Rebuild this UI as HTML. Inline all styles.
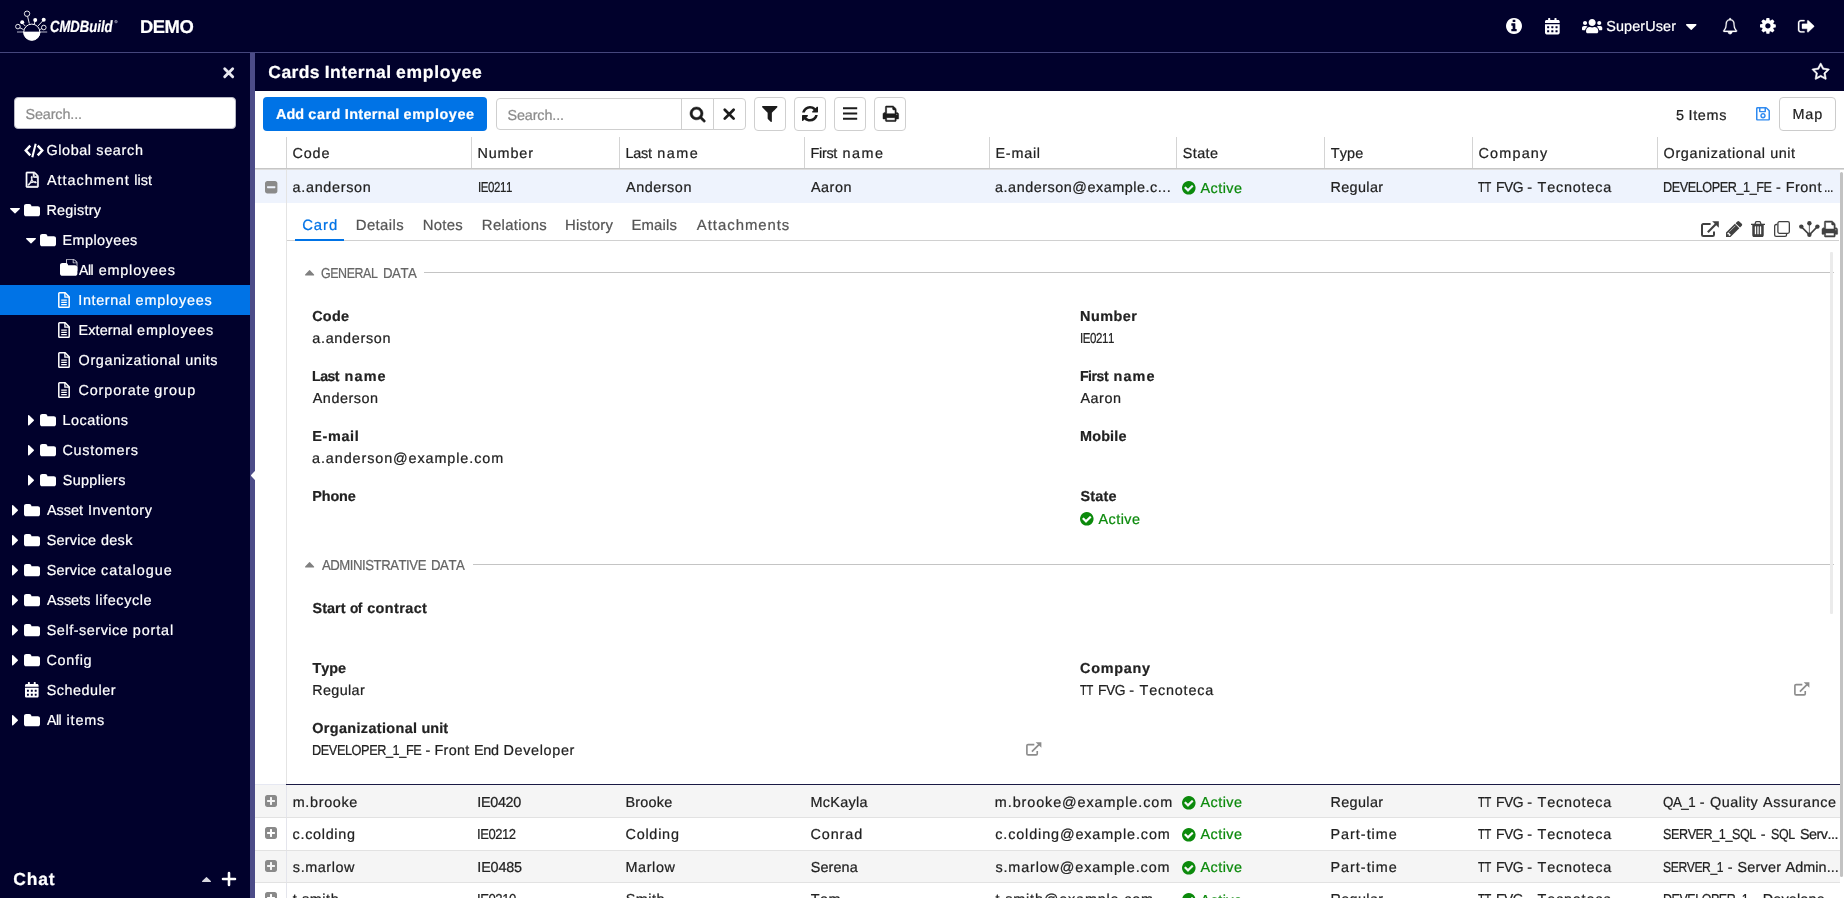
<!DOCTYPE html>
<html lang="en"><head><meta charset="utf-8"><title>CMDBuild - Cards Internal employee</title>
<style>
html,body{margin:0;padding:0}
body{width:1844px;height:898px;overflow:hidden;position:relative;background:#fff;font-family:"Liberation Sans",sans-serif;font-kerning:none;color:#222;will-change:transform}
.t{position:absolute;white-space:pre;line-height:20px;height:20px;font-size:14.4px;-webkit-text-stroke:0.22px currentColor;text-rendering:geometricPrecision}
.t span{position:absolute;top:0;transform-origin:0 0}
.b{position:absolute;box-sizing:border-box}
.i{position:absolute;display:block;overflow:visible}
.t{-webkit-text-stroke:0.22px currentColor;text-rendering:geometricPrecision}
</style></head><body>
<div class="b" style="left:0px;top:0px;width:1844px;height:52px;background:#01012c"></div>
<div class="b" style="left:0px;top:52px;width:1844px;height:1px;background:#45467c"></div>
<svg class="i" style="left:0;top:0;width:130px;height:52px" viewBox="0 0 130 52" fill="none" stroke="#fff" stroke-width="0.9"><path d="M17 32H47.2" stroke="#c8c8d8" stroke-width="0.9"/><circle cx="31.8" cy="32.2" r="8.1" stroke-width="1"/><path d="M23.3 32a8.5 8.5 0 0 0 17 0z" fill="#fff" stroke="none"/><circle cx="27.05" cy="13.7" r="2.7"/><path d="M27.6 16.4L29.3 23.6"/><circle cx="22.2" cy="22.3" r="2" fill="#fff" stroke="none"/><path d="M22.8 23.5L25.4 26.2"/><circle cx="17.9" cy="26.6" r="2.3"/><path d="M19.9 27.8L23.6 29.6"/><circle cx="35.2" cy="20.1" r="2" fill="#fff" stroke="none"/><path d="M35 21L34.3 24.2"/><circle cx="43.7" cy="19.8" r="2" fill="#fff" stroke="none"/><path d="M42.8 20.8L38 26"/><circle cx="43.8" cy="27.5" r="2.3"/><path d="M41.8 28.6L40.2 29.5"/></svg>
<div class="t" style="left:50.3px;top:17px;font-size:16.3px;font-weight:700;color:#fff;transform:scaleX(0.804);transform-origin:0 0;font-style:italic;">CMDBuild</div>
<div class="t" style="left:114.5px;top:12px;font-size:4px;font-weight:400;color:#9090a8;">®</div>
<div class="t" style="left:139.6px;top:17px;font-size:18.5px;font-weight:700;color:#fff;"><span style="left:0.27px;letter-spacing:-0.5px;transform:scaleX(0.996);">DEMO</span></div>
<svg class="i" style="left:1506px;top:18px;width:16px;height:16px" viewBox="0 0 1536 1536" preserveAspectRatio="none" fill="#fff"><path d="M1024 1248V1088Q1024 1074 1015 1065Q1006 1056 992 1056H896V544Q896 530 887 521Q878 512 864 512H544Q530 512 521 521Q512 530 512 544V704Q512 718 521 727Q530 736 544 736H640V1056H544Q530 1056 521 1065Q512 1074 512 1088V1248Q512 1262 521 1271Q530 1280 544 1280H992Q1006 1280 1015 1271Q1024 1262 1024 1248ZM896 352V192Q896 178 887 169Q878 160 864 160H672Q658 160 649 169Q640 178 640 192V352Q640 366 649 375Q658 384 672 384H864Q878 384 887 375Q896 366 896 352ZM1433 382Q1536 559 1536 768Q1536 977 1433 1154Q1330 1330 1154 1433Q977 1536 768 1536Q559 1536 382 1433Q206 1330 103 1154Q0 977 0 768Q0 559 103 382Q206 206 382 103Q559 0 768 0Q977 0 1154 103Q1330 206 1433 382Z"/></svg>
<svg class="i" style="left:1544.7px;top:17.8px;width:14.7px;height:16.4px" viewBox="0 0 448 512" preserveAspectRatio="none" fill="#fff"><path d="M0 464c0 26.5 21.5 48 48 48h352c26.5 0 48-21.5 48-48V192H0v272zm320-196c0-6.6 5.4-12 12-12h40c6.6 0 12 5.4 12 12v40c0 6.6-5.4 12-12 12h-40c-6.6 0-12-5.4-12-12v-40zm0 128c0-6.6 5.4-12 12-12h40c6.6 0 12 5.4 12 12v40c0 6.6-5.4 12-12 12h-40c-6.6 0-12-5.4-12-12v-40zM192 268c0-6.6 5.4-12 12-12h40c6.6 0 12 5.4 12 12v40c0 6.6-5.4 12-12 12h-40c-6.6 0-12-5.4-12-12v-40zm0 128c0-6.6 5.4-12 12-12h40c6.6 0 12 5.4 12 12v40c0 6.6-5.4 12-12 12h-40c-6.6 0-12-5.4-12-12v-40zM64 268c0-6.6 5.4-12 12-12h40c6.6 0 12 5.4 12 12v40c0 6.6-5.4 12-12 12H76c-6.6 0-12-5.4-12-12v-40zm0 128c0-6.6 5.4-12 12-12h40c6.6 0 12 5.4 12 12v40c0 6.6-5.4 12-12 12H76c-6.6 0-12-5.4-12-12v-40zM400 64h-48V16c0-8.8-7.2-16-16-16h-32c-8.800 0-16 7.200-16 16v48H160V16c0-8.800-7.200-16-16-16h-32c-8.800 0-16 7.200-16 16v48H48C21.500 64 0 85.500 0 112v48h448v-48c0-26.500-21.500-48-48-48z"/></svg>
<svg class="i" style="left:1581.8px;top:19px;width:20.3px;height:14.2px" viewBox="0 0 640 448" preserveAspectRatio="none" fill="#fff"><path d="M96 192c35.300 0 64-28.700 64-64s-28.700-64-64-64-64 28.700-64 64 28.700 64 64 64zm448 0c35.300 0 64-28.700 64-64s-28.700-64-64-64-64 28.700-64 64 28.700 64 64 64zm32 32h-64c-17.600 0-33.500 7.100-45.100 18.600 40.300 22.100 68.900 62 75.100 109.400h66c17.700 0 32-14.300 32-32v-32c0-35.300-28.700-64-64-64zm-256 0c61.900 0 112-50.100 112-112S381.900 0 320 0 208 50.100 208 112s50.100 112 112 112zm76.800 32h-8.300c-20.800 10-43.900 16-68.500 16s-47.600-6-68.500-16h-8.300C179.600 256 128 307.600 128 371.200V400c0 26.500 21.500 48 48 48h288c26.500 0 48-21.500 48-48v-28.800c0-63.600-51.600-115.200-115.200-115.200zm-223.700-13.400C161.500 231.100 145.600 224 128 224H64c-35.300 0-64 28.700-64 64v32c0 17.700 14.300 32 32 32h65.900c6.300-47.400 34.900-87.300 75.200-109.400z"/></svg>
<div class="t" style="left:1605.5px;top:17px;color:#fff;"><span style="left:0.74px;letter-spacing:0.12px;">SuperUser</span></div>
<svg class="i" style="left:1686px;top:23.5px;width:10.5px;height:6px" viewBox="0 0 1024 576" preserveAspectRatio="none" fill="#fff"><path d="M1005 109 557 557Q538 576 512 576Q486 576 467 557L19 109Q0 90 0 64Q0 38 19 19Q38 0 64 0H960Q986 0 1005 19Q1024 38 1024 64Q1024 90 1005 109Z"/></svg>
<svg class="i" style="left:1722.8px;top:17.8px;width:14.2px;height:16.2px" viewBox="0 0 1664 1792" preserveAspectRatio="none" fill="#fff" stroke="#fff" stroke-width="35" stroke-linejoin="round"><path d="M832 1680Q773 1680 730 1638Q688 1595 688 1536Q688 1520 672 1520Q656 1520 656 1536Q656 1609 708 1660Q759 1712 832 1712Q848 1712 848 1696Q848 1680 832 1680ZM182 1408H1482Q1216 1108 1216 576Q1216 525 1192 471Q1168 417 1123 368Q1078 319 1002 288Q925 256 832 256Q739 256 662 288Q586 319 541 368Q496 417 472 471Q448 525 448 576Q448 1108 182 1408ZM1664 1408Q1664 1460 1626 1498Q1588 1536 1536 1536H1088Q1088 1642 1013 1717Q938 1792 832 1792Q726 1792 651 1717Q576 1642 576 1536H128Q76 1536 38 1498Q0 1460 0 1408Q50 1366 91 1320Q132 1274 176 1200Q220 1127 250 1042Q281 957 300 836Q320 715 320 576Q320 424 437 294Q554 163 744 135Q736 116 736 96Q736 56 764 28Q792 0 832 0Q872 0 900 28Q928 56 928 96Q928 116 920 135Q1110 163 1227 294Q1344 424 1344 576Q1344 715 1364 836Q1383 957 1414 1042Q1444 1127 1488 1200Q1532 1274 1573 1320Q1614 1366 1664 1408Z"/></svg>
<svg class="i" style="left:1760px;top:18px;width:15.8px;height:15.8px" viewBox="0 0 1536 1536" preserveAspectRatio="none" fill="#fff"><path d="M949 949Q1024 874 1024 768Q1024 662 949 587Q874 512 768 512Q662 512 587 587Q512 662 512 768Q512 874 587 949Q662 1024 768 1024Q874 1024 949 949ZM1536 659V881Q1536 893 1528 904Q1520 915 1508 917L1323 945Q1304 999 1284 1036Q1319 1086 1391 1174Q1401 1186 1401 1199Q1401 1212 1392 1222Q1365 1259 1293 1330Q1221 1401 1199 1401Q1187 1401 1173 1392L1035 1284Q991 1307 944 1322Q928 1458 915 1508Q908 1536 879 1536H657Q643 1536 632 1528Q622 1519 621 1506L593 1322Q544 1306 503 1285L362 1392Q352 1401 337 1401Q323 1401 312 1390Q186 1276 147 1222Q140 1212 140 1199Q140 1187 148 1176Q163 1155 199 1110Q235 1064 253 1039Q226 989 212 940L29 913Q16 911 8 900Q0 890 0 877V655Q0 643 8 632Q16 621 27 619L213 591Q227 545 252 499Q212 442 145 361Q135 349 135 337Q135 327 144 314Q170 278 242 206Q315 135 337 135Q350 135 363 145L501 252Q545 229 592 214Q608 78 621 28Q628 0 657 0H879Q893 0 904 8Q914 17 915 30L943 214Q992 230 1033 251L1175 144Q1184 135 1199 135Q1212 135 1224 145Q1353 264 1389 315Q1396 323 1396 337Q1396 349 1388 360Q1373 381 1337 426Q1301 472 1283 497Q1309 547 1324 595L1507 623Q1520 625 1528 636Q1536 646 1536 659Z"/></svg>
<svg class="i" style="left:1797.8px;top:19.7px;width:16.2px;height:12.6px" viewBox="0 0 1568 1280" preserveAspectRatio="none" fill="#fff" stroke="#fff" stroke-width="29" stroke-linejoin="round"><path d="M640 1184Q640 1188 641 1204Q642 1220 642 1230Q641 1241 638 1254Q636 1267 628 1274Q621 1280 608 1280H288Q169 1280 84 1196Q0 1111 0 992V288Q0 169 84 84Q169 0 288 0H608Q621 0 630 10Q640 19 640 32Q640 36 641 52Q642 68 642 78Q641 89 638 102Q636 115 628 122Q621 128 608 128H288Q222 128 175 175Q128 222 128 288V992Q128 1058 175 1105Q222 1152 288 1152H576Q577 1152 587 1152Q597 1152 600 1152Q603 1152 612 1153Q620 1154 623 1156Q626 1158 631 1162Q636 1165 638 1170Q640 1176 640 1184ZM1549 685 1005 1229Q986 1248 960 1248Q934 1248 915 1229Q896 1210 896 1184V896H448Q422 896 403 877Q384 858 384 832V448Q384 422 403 403Q422 384 448 384H896V96Q896 70 915 51Q934 32 960 32Q986 32 1005 51L1549 595Q1568 614 1568 640Q1568 666 1549 685Z"/></svg>
<div class="b" style="left:0px;top:53px;width:250px;height:845px;background:#01012c"></div>
<div class="b" style="left:250px;top:53px;width:5px;height:845px;background:#4c4c88"></div>
<svg class="i" style="left:222.8px;top:66.5px;width:11.4px;height:11.4px" viewBox="0 0 12 12" fill="none" stroke="#e8e8f0"><path d="M1.8 1.8L10.2 10.2M10.2 1.8L1.8 10.2" stroke-width="3" stroke-linecap="round"/></svg>
<div class="b" style="left:14px;top:97px;width:222px;height:32px;background:#fff;border:1px solid #b8b8c4;border-radius:4px"></div>
<div class="t" style="left:24.7px;top:105px;color:#8c8c8c;"><span style="left:0.74px;letter-spacing:-0.12px;">Search...</span></div>
<div class="b" style="left:0px;top:285px;width:250px;height:30px;background:#0073e6"></div>
<div class="t" style="left:46px;top:141px;color:#fff;"><span style="left:0.48px;letter-spacing:0.59px;">Global</span> <span style="left:50.25px;letter-spacing:0.7px;">search</span></div>
<svg class="i" style="left:24px;top:142.5px;width:20px;height:15px" viewBox="0 0 20 15" fill="none" stroke="#fff"><path d="M6.3 2.7L1.8 7.5L6.3 12.3M13.7 2.7L18.2 7.5L13.7 12.3" stroke-width="2.5" stroke-linejoin="miter"/><path d="M11.7 0.7L8.3 14.3" stroke-width="2.1"/></svg>
<div class="t" style="left:46px;top:171px;color:#fff;"><span style="left:1.03px;letter-spacing:1px;">Attachment</span> <span style="left:88.15px;letter-spacing:0.05px;">list</span></div>
<svg class="i" style="left:25.9px;top:172.3px;width:12.4px;height:15.4px" viewBox="0 0 1536 1792" preserveAspectRatio="none" fill="#fff" stroke="#fff" stroke-width="87" stroke-linejoin="round"><path d="M1468 380Q1496 408 1516 456Q1536 504 1536 544V1696Q1536 1736 1508 1764Q1480 1792 1440 1792H96Q56 1792 28 1764Q0 1736 0 1696V96Q0 56 28 28Q56 0 96 0H992Q1032 0 1080 20Q1128 40 1156 68ZM1024 136V512H1400Q1390 483 1378 471L1065 158Q1053 146 1024 136ZM1408 1664V640H992Q952 640 924 612Q896 584 896 544V128H128V1664ZM894 1071Q927 1097 978 1127Q1037 1120 1095 1120Q1242 1120 1272 1169Q1288 1191 1274 1221Q1274 1222 1273 1223Q1272 1224 1271 1225V1226Q1265 1264 1200 1264Q1152 1264 1085 1244Q1018 1224 955 1191Q734 1215 563 1274Q410 1536 321 1536Q306 1536 293 1529L269 1517Q268 1516 263 1512Q253 1502 257 1476Q266 1436 313 1384Q360 1333 445 1288Q459 1279 468 1294Q470 1296 470 1298Q522 1213 577 1101Q645 965 681 839Q657 757 650 680Q644 602 657 552Q668 512 699 512H720H721Q744 512 756 527Q774 548 765 595Q763 601 761 603Q762 606 762 611V641Q760 764 748 833Q803 997 894 1071ZM318 1482Q370 1458 455 1324Q404 1364 368 1408Q331 1452 318 1482ZM716 562Q701 604 714 694Q715 687 721 650Q721 647 728 607Q729 603 732 599Q731 598 731 597Q730 595 730 594Q729 572 717 558Q717 559 716 560ZM592 1223Q727 1169 876 1142Q874 1141 863 1132Q852 1124 847 1119Q771 1052 720 943Q693 1029 637 1140Q607 1196 592 1223ZM1238 1207Q1214 1183 1098 1183Q1174 1211 1222 1211Q1236 1211 1240 1210Q1240 1209 1238 1207Z"/></svg>
<div class="t" style="left:46px;top:201px;color:#fff;"><span style="left:0.5px;letter-spacing:0.23px;">Registry</span></div>
<svg class="i" style="left:24px;top:204.0px;width:16px;height:12.3px" viewBox="0 0 1664 1408" preserveAspectRatio="none" fill="#fff"><path d="M1664 480V1184Q1664 1276 1598 1342Q1532 1408 1440 1408H224Q132 1408 66 1342Q0 1276 0 1184V224Q0 132 66 66Q132 0 224 0H544Q636 0 702 66Q768 132 768 224V256H1440Q1532 256 1598 322Q1664 388 1664 480Z"/></svg>
<svg class="i" style="left:10px;top:207.8px;width:10px;height:5.5px" viewBox="0 0 1024 576" preserveAspectRatio="none" fill="#fff"><path d="M1005 109 557 557Q538 576 512 576Q486 576 467 557L19 109Q0 90 0 64Q0 38 19 19Q38 0 64 0H960Q986 0 1005 19Q1024 38 1024 64Q1024 90 1005 109Z"/></svg>
<div class="t" style="left:62px;top:231px;color:#fff;"><span style="left:0.5px;letter-spacing:0.45px;">Employees</span></div>
<svg class="i" style="left:40px;top:234.0px;width:16px;height:12.3px" viewBox="0 0 1664 1408" preserveAspectRatio="none" fill="#fff"><path d="M1664 480V1184Q1664 1276 1598 1342Q1532 1408 1440 1408H224Q132 1408 66 1342Q0 1276 0 1184V224Q0 132 66 66Q132 0 224 0H544Q636 0 702 66Q768 132 768 224V256H1440Q1532 256 1598 322Q1664 388 1664 480Z"/></svg>
<svg class="i" style="left:26px;top:237.8px;width:10px;height:5.5px" viewBox="0 0 1024 576" preserveAspectRatio="none" fill="#fff"><path d="M1005 109 557 557Q538 576 512 576Q486 576 467 557L19 109Q0 90 0 64Q0 38 19 19Q38 0 64 0H960Q986 0 1005 19Q1024 38 1024 64Q1024 90 1005 109Z"/></svg>
<div class="t" style="left:78px;top:261px;color:#fff;"><span style="left:1.03px;letter-spacing:-0.5px;transform:scaleX(0.976);">All</span> <span style="left:20.64px;letter-spacing:0.83px;">employees</span></div>
<svg class="i" style="left:65.5px;top:259.0px;width:11.5px;height:12px" viewBox="0 0 1536 1792" preserveAspectRatio="none" fill="#c8c8d4"><path d="M1468 380Q1496 408 1516 456Q1536 504 1536 544V1696Q1536 1736 1508 1764Q1480 1792 1440 1792H96Q56 1792 28 1764Q0 1736 0 1696V96Q0 56 28 28Q56 0 96 0H992Q1032 0 1080 20Q1128 40 1156 68ZM1024 136V512H1400Q1390 483 1378 471L1065 158Q1053 146 1024 136ZM1408 1664V640H992Q952 640 924 612Q896 584 896 544V128H128V1664Z"/></svg>
<svg class="i" style="left:60px;top:263.4px;width:17.4px;height:12.8px" viewBox="0 0 1664 1408" preserveAspectRatio="none" fill="#fff"><path d="M1664 480V1184Q1664 1276 1598 1342Q1532 1408 1440 1408H224Q132 1408 66 1342Q0 1276 0 1184V224Q0 132 66 66Q132 0 224 0H544Q636 0 702 66Q768 132 768 224V256H1440Q1532 256 1598 322Q1664 388 1664 480Z"/></svg>
<div class="t" style="left:78px;top:291px;color:#fff;"><span style="left:0.35px;letter-spacing:0.61px;">Internal</span> <span style="left:57.59px;letter-spacing:0.83px;">employees</span></div>
<svg class="i" style="left:58.2px;top:292.2px;width:12px;height:16px" viewBox="0 0 12 16" fill="none" stroke="#fff"><path d="M1.6.8H7.1L11.2 4.9V14.4A.8.8 0 0 1 10.4 15.2H1.6A.8.8 0 0 1 .8 14.4V1.6A.8.8 0 0 1 1.6.8Z" stroke-width="1.5"/><path d="M6.9 1V5.1H11" stroke-width="1.3"/><path d="M3.2 8.1H8.8M3.2 10.4H8.8M3.2 12.7H8.8" stroke-width="1.25"/></svg>
<div class="t" style="left:78px;top:321px;color:#fff;"><span style="left:0.5px;letter-spacing:0.12px;">External</span> <span style="left:59.07px;letter-spacing:0.83px;">employees</span></div>
<svg class="i" style="left:58.2px;top:322.2px;width:12px;height:16px" viewBox="0 0 12 16" fill="none" stroke="#fff"><path d="M1.6.8H7.1L11.2 4.9V14.4A.8.8 0 0 1 10.4 15.2H1.6A.8.8 0 0 1 .8 14.4V1.6A.8.8 0 0 1 1.6.8Z" stroke-width="1.5"/><path d="M6.9 1V5.1H11" stroke-width="1.3"/><path d="M3.2 8.1H8.8M3.2 10.4H8.8M3.2 12.7H8.8" stroke-width="1.25"/></svg>
<div class="t" style="left:78px;top:351px;color:#fff;"><span style="left:0.52px;letter-spacing:0.67px;">Organizational</span> <span style="left:107.16px;letter-spacing:0.5px;">units</span></div>
<svg class="i" style="left:58.2px;top:352.2px;width:12px;height:16px" viewBox="0 0 12 16" fill="none" stroke="#fff"><path d="M1.6.8H7.1L11.2 4.9V14.4A.8.8 0 0 1 10.4 15.2H1.6A.8.8 0 0 1 .8 14.4V1.6A.8.8 0 0 1 1.6.8Z" stroke-width="1.5"/><path d="M6.9 1V5.1H11" stroke-width="1.3"/><path d="M3.2 8.1H8.8M3.2 10.4H8.8M3.2 12.7H8.8" stroke-width="1.25"/></svg>
<div class="t" style="left:78px;top:381px;color:#fff;"><span style="left:0.47px;letter-spacing:0.87px;">Corporate</span> <span style="left:76.21px;letter-spacing:1.04px;">group</span></div>
<svg class="i" style="left:58.2px;top:382.2px;width:12px;height:16px" viewBox="0 0 12 16" fill="none" stroke="#fff"><path d="M1.6.8H7.1L11.2 4.9V14.4A.8.8 0 0 1 10.4 15.2H1.6A.8.8 0 0 1 .8 14.4V1.6A.8.8 0 0 1 1.6.8Z" stroke-width="1.5"/><path d="M6.9 1V5.1H11" stroke-width="1.3"/><path d="M3.2 8.1H8.8M3.2 10.4H8.8M3.2 12.7H8.8" stroke-width="1.25"/></svg>
<div class="t" style="left:62px;top:411px;color:#fff;"><span style="left:0.5px;letter-spacing:0.49px;">Locations</span></div>
<svg class="i" style="left:40px;top:414.0px;width:16px;height:12.3px" viewBox="0 0 1664 1408" preserveAspectRatio="none" fill="#fff"><path d="M1664 480V1184Q1664 1276 1598 1342Q1532 1408 1440 1408H224Q132 1408 66 1342Q0 1276 0 1184V224Q0 132 66 66Q132 0 224 0H544Q636 0 702 66Q768 132 768 224V256H1440Q1532 256 1598 322Q1664 388 1664 480Z"/></svg>
<svg class="i" style="left:27.8px;top:414.8px;width:6px;height:10.5px" viewBox="0 0 576 1024" preserveAspectRatio="none" fill="#fff"><path d="M557 557 109 1005Q90 1024 64 1024Q38 1024 19 1005Q0 986 0 960V64Q0 38 19 19Q38 0 64 0Q90 0 109 19L557 467Q576 486 576 512Q576 538 557 557Z"/></svg>
<div class="t" style="left:62px;top:441px;color:#fff;"><span style="left:0.47px;letter-spacing:0.75px;">Customers</span></div>
<svg class="i" style="left:40px;top:444.0px;width:16px;height:12.3px" viewBox="0 0 1664 1408" preserveAspectRatio="none" fill="#fff"><path d="M1664 480V1184Q1664 1276 1598 1342Q1532 1408 1440 1408H224Q132 1408 66 1342Q0 1276 0 1184V224Q0 132 66 66Q132 0 224 0H544Q636 0 702 66Q768 132 768 224V256H1440Q1532 256 1598 322Q1664 388 1664 480Z"/></svg>
<svg class="i" style="left:27.8px;top:444.8px;width:6px;height:10.5px" viewBox="0 0 576 1024" preserveAspectRatio="none" fill="#fff"><path d="M557 557 109 1005Q90 1024 64 1024Q38 1024 19 1005Q0 986 0 960V64Q0 38 19 19Q38 0 64 0Q90 0 109 19L557 467Q576 486 576 512Q576 538 557 557Z"/></svg>
<div class="t" style="left:62px;top:471px;color:#fff;"><span style="left:0.74px;letter-spacing:0.34px;">Suppliers</span></div>
<svg class="i" style="left:40px;top:474.0px;width:16px;height:12.3px" viewBox="0 0 1664 1408" preserveAspectRatio="none" fill="#fff"><path d="M1664 480V1184Q1664 1276 1598 1342Q1532 1408 1440 1408H224Q132 1408 66 1342Q0 1276 0 1184V224Q0 132 66 66Q132 0 224 0H544Q636 0 702 66Q768 132 768 224V256H1440Q1532 256 1598 322Q1664 388 1664 480Z"/></svg>
<svg class="i" style="left:27.8px;top:474.8px;width:6px;height:10.5px" viewBox="0 0 576 1024" preserveAspectRatio="none" fill="#fff"><path d="M557 557 109 1005Q90 1024 64 1024Q38 1024 19 1005Q0 986 0 960V64Q0 38 19 19Q38 0 64 0Q90 0 109 19L557 467Q576 486 576 512Q576 538 557 557Z"/></svg>
<div class="t" style="left:46px;top:501px;color:#fff;"><span style="left:1.03px;letter-spacing:-0.02px;">Asset</span> <span style="left:41.91px;letter-spacing:0.6px;">Inventory</span></div>
<svg class="i" style="left:24px;top:504.0px;width:16px;height:12.3px" viewBox="0 0 1664 1408" preserveAspectRatio="none" fill="#fff"><path d="M1664 480V1184Q1664 1276 1598 1342Q1532 1408 1440 1408H224Q132 1408 66 1342Q0 1276 0 1184V224Q0 132 66 66Q132 0 224 0H544Q636 0 702 66Q768 132 768 224V256H1440Q1532 256 1598 322Q1664 388 1664 480Z"/></svg>
<svg class="i" style="left:11.8px;top:504.8px;width:6px;height:10.5px" viewBox="0 0 576 1024" preserveAspectRatio="none" fill="#fff"><path d="M557 557 109 1005Q90 1024 64 1024Q38 1024 19 1005Q0 986 0 960V64Q0 38 19 19Q38 0 64 0Q90 0 109 19L557 467Q576 486 576 512Q576 538 557 557Z"/></svg>
<div class="t" style="left:46px;top:531px;color:#fff;"><span style="left:0.74px;letter-spacing:0.23px;">Service</span> <span style="left:54.93px;letter-spacing:0.34px;">desk</span></div>
<svg class="i" style="left:24px;top:534.0px;width:16px;height:12.3px" viewBox="0 0 1664 1408" preserveAspectRatio="none" fill="#fff"><path d="M1664 480V1184Q1664 1276 1598 1342Q1532 1408 1440 1408H224Q132 1408 66 1342Q0 1276 0 1184V224Q0 132 66 66Q132 0 224 0H544Q636 0 702 66Q768 132 768 224V256H1440Q1532 256 1598 322Q1664 388 1664 480Z"/></svg>
<svg class="i" style="left:11.8px;top:534.8px;width:6px;height:10.5px" viewBox="0 0 576 1024" preserveAspectRatio="none" fill="#fff"><path d="M557 557 109 1005Q90 1024 64 1024Q38 1024 19 1005Q0 986 0 960V64Q0 38 19 19Q38 0 64 0Q90 0 109 19L557 467Q576 486 576 512Q576 538 557 557Z"/></svg>
<div class="t" style="left:46px;top:561px;color:#fff;"><span style="left:0.74px;letter-spacing:0.23px;">Service</span> <span style="left:54.92px;letter-spacing:1.07px;">catalogue</span></div>
<svg class="i" style="left:24px;top:564.0px;width:16px;height:12.3px" viewBox="0 0 1664 1408" preserveAspectRatio="none" fill="#fff"><path d="M1664 480V1184Q1664 1276 1598 1342Q1532 1408 1440 1408H224Q132 1408 66 1342Q0 1276 0 1184V224Q0 132 66 66Q132 0 224 0H544Q636 0 702 66Q768 132 768 224V256H1440Q1532 256 1598 322Q1664 388 1664 480Z"/></svg>
<svg class="i" style="left:11.8px;top:564.8px;width:6px;height:10.5px" viewBox="0 0 576 1024" preserveAspectRatio="none" fill="#fff"><path d="M557 557 109 1005Q90 1024 64 1024Q38 1024 19 1005Q0 986 0 960V64Q0 38 19 19Q38 0 64 0Q90 0 109 19L557 467Q576 486 576 512Q576 538 557 557Z"/></svg>
<div class="t" style="left:46px;top:591px;color:#fff;"><span style="left:1.03px;letter-spacing:0.04px;">Assets</span> <span style="left:49.57px;letter-spacing:0.6px;">lifecycle</span></div>
<svg class="i" style="left:24px;top:594.0px;width:16px;height:12.3px" viewBox="0 0 1664 1408" preserveAspectRatio="none" fill="#fff"><path d="M1664 480V1184Q1664 1276 1598 1342Q1532 1408 1440 1408H224Q132 1408 66 1342Q0 1276 0 1184V224Q0 132 66 66Q132 0 224 0H544Q636 0 702 66Q768 132 768 224V256H1440Q1532 256 1598 322Q1664 388 1664 480Z"/></svg>
<svg class="i" style="left:11.8px;top:594.8px;width:6px;height:10.5px" viewBox="0 0 576 1024" preserveAspectRatio="none" fill="#fff"><path d="M557 557 109 1005Q90 1024 64 1024Q38 1024 19 1005Q0 986 0 960V64Q0 38 19 19Q38 0 64 0Q90 0 109 19L557 467Q576 486 576 512Q576 538 557 557Z"/></svg>
<div class="t" style="left:46px;top:621px;color:#fff;"><span style="left:0.74px;letter-spacing:0.54px;">Self-service</span> <span style="left:86.83px;letter-spacing:0.85px;">portal</span></div>
<svg class="i" style="left:24px;top:624.0px;width:16px;height:12.3px" viewBox="0 0 1664 1408" preserveAspectRatio="none" fill="#fff"><path d="M1664 480V1184Q1664 1276 1598 1342Q1532 1408 1440 1408H224Q132 1408 66 1342Q0 1276 0 1184V224Q0 132 66 66Q132 0 224 0H544Q636 0 702 66Q768 132 768 224V256H1440Q1532 256 1598 322Q1664 388 1664 480Z"/></svg>
<svg class="i" style="left:11.8px;top:624.8px;width:6px;height:10.5px" viewBox="0 0 576 1024" preserveAspectRatio="none" fill="#fff"><path d="M557 557 109 1005Q90 1024 64 1024Q38 1024 19 1005Q0 986 0 960V64Q0 38 19 19Q38 0 64 0Q90 0 109 19L557 467Q576 486 576 512Q576 538 557 557Z"/></svg>
<div class="t" style="left:46px;top:651px;color:#fff;"><span style="left:0.47px;letter-spacing:0.7px;">Config</span></div>
<svg class="i" style="left:24px;top:654.0px;width:16px;height:12.3px" viewBox="0 0 1664 1408" preserveAspectRatio="none" fill="#fff"><path d="M1664 480V1184Q1664 1276 1598 1342Q1532 1408 1440 1408H224Q132 1408 66 1342Q0 1276 0 1184V224Q0 132 66 66Q132 0 224 0H544Q636 0 702 66Q768 132 768 224V256H1440Q1532 256 1598 322Q1664 388 1664 480Z"/></svg>
<svg class="i" style="left:11.8px;top:654.8px;width:6px;height:10.5px" viewBox="0 0 576 1024" preserveAspectRatio="none" fill="#fff"><path d="M557 557 109 1005Q90 1024 64 1024Q38 1024 19 1005Q0 986 0 960V64Q0 38 19 19Q38 0 64 0Q90 0 109 19L557 467Q576 486 576 512Q576 538 557 557Z"/></svg>
<div class="t" style="left:46px;top:681px;color:#fff;"><span style="left:0.74px;letter-spacing:0.49px;">Scheduler</span></div>
<svg class="i" style="left:25px;top:682.0px;width:13.6px;height:15.6px" viewBox="0 0 448 512" preserveAspectRatio="none" fill="#fff"><path d="M0 464c0 26.5 21.5 48 48 48h352c26.5 0 48-21.5 48-48V192H0v272zm320-196c0-6.6 5.4-12 12-12h40c6.6 0 12 5.4 12 12v40c0 6.6-5.4 12-12 12h-40c-6.6 0-12-5.4-12-12v-40zm0 128c0-6.6 5.4-12 12-12h40c6.6 0 12 5.4 12 12v40c0 6.6-5.4 12-12 12h-40c-6.6 0-12-5.4-12-12v-40zM192 268c0-6.6 5.4-12 12-12h40c6.6 0 12 5.4 12 12v40c0 6.6-5.4 12-12 12h-40c-6.6 0-12-5.4-12-12v-40zm0 128c0-6.6 5.4-12 12-12h40c6.6 0 12 5.4 12 12v40c0 6.6-5.4 12-12 12h-40c-6.6 0-12-5.4-12-12v-40zM64 268c0-6.6 5.4-12 12-12h40c6.6 0 12 5.4 12 12v40c0 6.6-5.4 12-12 12H76c-6.6 0-12-5.4-12-12v-40zm0 128c0-6.6 5.4-12 12-12h40c6.6 0 12 5.4 12 12v40c0 6.6-5.4 12-12 12H76c-6.6 0-12-5.4-12-12v-40zM400 64h-48V16c0-8.8-7.2-16-16-16h-32c-8.800 0-16 7.200-16 16v48H160V16c0-8.800-7.200-16-16-16h-32c-8.800 0-16 7.200-16 16v48H48C21.500 64 0 85.500 0 112v48h448v-48c0-26.500-21.500-48-48-48z"/></svg>
<div class="t" style="left:46px;top:711px;color:#fff;"><span style="left:1.03px;letter-spacing:-0.5px;transform:scaleX(0.976);">All</span> <span style="left:20.55px;letter-spacing:0.84px;">items</span></div>
<svg class="i" style="left:24px;top:714.0px;width:16px;height:12.3px" viewBox="0 0 1664 1408" preserveAspectRatio="none" fill="#fff"><path d="M1664 480V1184Q1664 1276 1598 1342Q1532 1408 1440 1408H224Q132 1408 66 1342Q0 1276 0 1184V224Q0 132 66 66Q132 0 224 0H544Q636 0 702 66Q768 132 768 224V256H1440Q1532 256 1598 322Q1664 388 1664 480Z"/></svg>
<svg class="i" style="left:11.8px;top:714.8px;width:6px;height:10.5px" viewBox="0 0 576 1024" preserveAspectRatio="none" fill="#fff"><path d="M557 557 109 1005Q90 1024 64 1024Q38 1024 19 1005Q0 986 0 960V64Q0 38 19 19Q38 0 64 0Q90 0 109 19L557 467Q576 486 576 512Q576 538 557 557Z"/></svg>
<div class="t" style="left:12.9px;top:869px;font-size:17.5px;font-weight:700;color:#fff;"><span style="left:0.48px;letter-spacing:0.74px;">Chat</span></div>
<svg class="i" style="left:202px;top:877px;width:9px;height:5px" viewBox="0 0 1024 576" preserveAspectRatio="none" fill="#d8d8e0"><path d="M960 576H64Q38 576 19 557Q0 538 0 512Q0 486 19 467L467 19Q486 0 512 0Q538 0 557 19L1005 467Q1024 486 1024 512Q1024 538 1005 557Q986 576 960 576Z"/></svg>
<svg class="i" style="left:222px;top:872px;width:14px;height:14px" viewBox="0 0 14 14" fill="none" stroke="#fff"><path d="M7 1V13M1 7H13" stroke-width="2.6" stroke-linecap="round"/></svg>
<svg class="i" style="left:250.5px;top:471px;width:4.5px;height:9px" viewBox="0 0 576 1024" preserveAspectRatio="none" fill="#fff"><path d="M576 64V960Q576 986 557 1005Q538 1024 512 1024Q486 1024 467 1005L19 557Q0 538 0 512Q0 486 19 467L467 19Q486 0 512 0Q538 0 557 19Q576 38 576 64Z"/></svg>
<div class="b" style="left:255px;top:53px;width:1589px;height:38px;background:#01012c"></div>
<div class="t" style="left:267.9px;top:62px;font-size:17.5px;font-weight:700;color:#fff;"><span style="left:0.48px;letter-spacing:0.4px;">Cards</span> <span style="left:56.88px;letter-spacing:0.45px;">Internal</span> <span style="left:128.21px;letter-spacing:0.71px;">employee</span></div>
<svg class="i" style="left:1812.3px;top:63.3px;width:17.4px;height:16.4px" viewBox="0 0 1664 1587" preserveAspectRatio="none" fill="#fff" stroke="#fff" stroke-width="57" stroke-linejoin="round"><path d="M1137 972 1443 675 1021 613 832 231 643 613 221 675 527 972 454 1393 832 1194 1209 1393ZM1664 615Q1664 637 1638 663L1275 1017L1361 1517Q1362 1524 1362 1537Q1362 1587 1321 1587Q1302 1587 1281 1575L832 1339L383 1575Q361 1587 343 1587Q322 1587 312 1572Q301 1558 301 1537Q301 1531 303 1517L389 1017L25 663Q0 636 0 615Q0 578 56 569L558 496L783 41Q802 0 832 0Q862 0 881 41L1106 496L1608 569Q1664 578 1664 615Z"/></svg>
<div class="b" style="left:263px;top:97px;width:224px;height:34px;background:#0073e6;border-radius:4px"></div>
<div class="t" style="left:275.5px;top:105px;font-weight:700;color:#fff;"><span style="left:0.61px;letter-spacing:-0.04px;">Add</span> <span style="left:32.83px;letter-spacing:0.56px;">card</span> <span style="left:69.34px;letter-spacing:0.35px;">Internal</span> <span style="left:128.08px;letter-spacing:0.57px;">employee</span></div>
<div class="b" style="left:496px;top:98px;width:186px;height:32px;background:#fff;border:1px solid #cfcfcf;border-radius:4px 0 0 4px"></div>
<div class="t" style="left:506.7px;top:106px;color:#8c8c8c;"><span style="left:0.74px;letter-spacing:-0.12px;">Search...</span></div>
<div class="b" style="left:681px;top:98px;width:33px;height:32px;background:#fff;border:1px solid #cfcfcf"></div>
<div class="b" style="left:713px;top:98px;width:33px;height:32px;background:#fff;border:1px solid #cfcfcf;border-radius:0 4px 4px 0"></div>
<div class="b" style="left:754px;top:97px;width:32px;height:34px;background:#fff;border:1px solid #cfcfcf;border-radius:4px"></div>
<div class="b" style="left:794px;top:97px;width:32px;height:34px;background:#fff;border:1px solid #cfcfcf;border-radius:4px"></div>
<div class="b" style="left:834px;top:97px;width:32px;height:34px;background:#fff;border:1px solid #cfcfcf;border-radius:4px"></div>
<div class="b" style="left:874px;top:97px;width:32px;height:34px;background:#fff;border:1px solid #cfcfcf;border-radius:4px"></div>
<svg class="i" style="left:689.7px;top:106.5px;width:15.4px;height:15.2px" viewBox="0 0 1664 1664" preserveAspectRatio="none" fill="#1c1c1c" stroke="#1c1c1c" stroke-width="54" stroke-linejoin="round"><path d="M1020 1020Q1152 889 1152 704Q1152 519 1020 388Q889 256 704 256Q519 256 388 388Q256 519 256 704Q256 889 388 1020Q519 1152 704 1152Q889 1152 1020 1020ZM1664 1536Q1664 1588 1626 1626Q1588 1664 1536 1664Q1482 1664 1446 1626L1103 1284Q924 1408 704 1408Q561 1408 430 1352Q300 1297 206 1202Q111 1108 56 978Q0 847 0 704Q0 561 56 430Q111 300 206 206Q300 111 430 56Q561 0 704 0Q847 0 978 56Q1108 111 1202 206Q1297 300 1352 430Q1408 561 1408 704Q1408 924 1284 1103L1627 1446Q1664 1483 1664 1536Z"/></svg>
<svg class="i" style="left:723.2px;top:108px;width:12.4px;height:12.4px" viewBox="0 0 12 12" fill="none" stroke="#1c1c1c"><path d="M1.7 1.7L10.3 10.3M10.3 1.7L1.7 10.3" stroke-width="2.7" stroke-linecap="round"/></svg>
<svg class="i" style="left:762.3px;top:105.8px;width:15.5px;height:16px" viewBox="0 0 1410 1408" preserveAspectRatio="none" fill="#1c1c1c"><path d="M1404 39Q1421 80 1390 109L897 602V1344Q897 1386 858 1403Q845 1408 833 1408Q806 1408 788 1389L532 1133Q513 1114 513 1088V602L20 109Q-11 80 6 39Q23 0 65 0H1345Q1387 0 1404 39Z"/></svg>
<svg class="i" style="left:802.2px;top:106.3px;width:16px;height:15.6px" viewBox="0 0 1536 1536" preserveAspectRatio="none" fill="#1c1c1c"><path d="M1511 928Q1511 933 1510 935Q1446 1203 1242 1370Q1038 1536 764 1536Q618 1536 482 1481Q345 1426 238 1324L109 1453Q90 1472 64 1472Q38 1472 19 1453Q0 1434 0 1408V960Q0 934 19 915Q38 896 64 896H512Q538 896 557 915Q576 934 576 960Q576 986 557 1005L420 1142Q491 1208 581 1244Q671 1280 768 1280Q902 1280 1018 1215Q1134 1150 1204 1036Q1215 1019 1257 919Q1265 896 1287 896H1479Q1492 896 1502 906Q1511 915 1511 928ZM1536 128V576Q1536 602 1517 621Q1498 640 1472 640H1024Q998 640 979 621Q960 602 960 576Q960 550 979 531L1117 393Q969 256 768 256Q634 256 518 321Q402 386 332 500Q321 517 279 617Q271 640 249 640H50Q37 640 28 630Q18 621 18 608V601Q83 333 288 166Q493 0 768 0Q914 0 1052 56Q1190 111 1297 212L1427 83Q1446 64 1472 64Q1498 64 1517 83Q1536 102 1536 128Z"/></svg>
<svg class="i" style="left:842.8px;top:107.3px;width:14.2px;height:13px" viewBox="0 0 14.2 13" fill="none" stroke="#1c1c1c"><path d="M0 1.2H14.2M0 6.5H14.2M0 11.8H14.2" stroke-width="2"/></svg>
<svg class="i" style="left:882.6px;top:106.3px;width:15.6px;height:15.5px" viewBox="0 0 1664 1536" preserveAspectRatio="none" fill="#1c1c1c" stroke="#1c1c1c" stroke-width="53" stroke-linejoin="round"><path d="M384 1408H1280V1152H384ZM384 768H1280V384H1120Q1080 384 1052 356Q1024 328 1024 288V128H384ZM1517 877Q1536 858 1536 832Q1536 806 1517 787Q1498 768 1472 768Q1446 768 1427 787Q1408 806 1408 832Q1408 858 1427 877Q1446 896 1472 896Q1498 896 1517 877ZM1664 832V1248Q1664 1261 1654 1270Q1645 1280 1632 1280H1408V1440Q1408 1480 1380 1508Q1352 1536 1312 1536H352Q312 1536 284 1508Q256 1480 256 1440V1280H32Q19 1280 10 1270Q0 1261 0 1248V832Q0 753 56 696Q113 640 192 640H256V96Q256 56 284 28Q312 0 352 0H1024Q1064 0 1112 20Q1160 40 1188 68L1340 220Q1368 248 1388 296Q1408 344 1408 384V640H1472Q1551 640 1608 696Q1664 753 1664 832Z"/></svg>
<div class="t" style="left:1675.6px;top:106px;color:#222;"><span style="left:0.51px;">5</span> <span style="left:12.86px;letter-spacing:0.68px;">Items</span></div>
<svg class="i" style="left:1756px;top:107px;width:14px;height:13.6px" viewBox="0 0 448 448" preserveAspectRatio="none" fill="#2f8af0"><path d="M433.941 97.941l-83.882-83.882A48 48 0 0 0 316.118 0H48C21.490 0 0 21.490 0 48v352c0 26.510 21.490 48 48 48h352c26.510 0 48-21.490 48-48V131.882a48 48 0 0 0-14.059-33.941zM272 48v80H144V48h128zm122 352H54a6 6 0 0 1-6-6V54a6 6 0 0 1 6-6h42v104c0 13.255 10.745 24 24 24h176c13.255 0 24-10.745 24-24V51.882l78.243 78.243a6 6 0 0 1 1.757 4.243V394a6 6 0 0 1-6 6zM224 200c-48.523 0-88 39.477-88 88s39.477 88 88 88 88-39.477 88-88-39.477-88-88-88zm0 128c-22.056 0-40-17.944-40-40s17.944-40 40-40 40 17.944 40 40-17.944 40-40 40z"/></svg>
<div class="b" style="left:1779px;top:97px;width:57px;height:34px;background:#fff;border:1px solid #ccc;border-radius:4px"></div>
<div class="t" style="left:1791.9px;top:105px;color:#222;"><span style="left:0.5px;letter-spacing:0.99px;">Map</span></div>
<div class="b" style="left:286px;top:137px;width:1px;height:32px;background:#d4d4d4"></div>
<div class="b" style="left:471px;top:137px;width:1px;height:32px;background:#d4d4d4"></div>
<div class="b" style="left:619px;top:137px;width:1px;height:32px;background:#d4d4d4"></div>
<div class="b" style="left:804px;top:137px;width:1px;height:32px;background:#d4d4d4"></div>
<div class="b" style="left:989px;top:137px;width:1px;height:32px;background:#d4d4d4"></div>
<div class="b" style="left:1176px;top:137px;width:1px;height:32px;background:#d4d4d4"></div>
<div class="b" style="left:1324px;top:137px;width:1px;height:32px;background:#d4d4d4"></div>
<div class="b" style="left:1472px;top:137px;width:1px;height:32px;background:#d4d4d4"></div>
<div class="b" style="left:1657px;top:137px;width:1px;height:32px;background:#d4d4d4"></div>
<div class="t" style="left:292px;top:144px;color:#222;"><span style="left:0.47px;letter-spacing:0.85px;">Code</span></div>
<div class="t" style="left:477px;top:144px;color:#222;"><span style="left:0.5px;letter-spacing:0.85px;">Number</span></div>
<div class="t" style="left:625px;top:144px;color:#222;"><span style="left:0.5px;letter-spacing:-0.22px;">Last</span> <span style="left:32.36px;letter-spacing:1.45px;">name</span></div>
<div class="t" style="left:810px;top:144px;color:#222;"><span style="left:0.5px;letter-spacing:-0.3px;">First</span> <span style="left:32.58px;letter-spacing:1.44px;">name</span></div>
<div class="t" style="left:995px;top:144px;color:#222;"><span style="left:0.5px;letter-spacing:0.75px;">E-mail</span></div>
<div class="t" style="left:1182px;top:144px;color:#222;"><span style="left:0.74px;letter-spacing:0.43px;">State</span></div>
<div class="t" style="left:1330px;top:144px;color:#222;"><span style="left:0.75px;letter-spacing:0.13px;">Type</span></div>
<div class="t" style="left:1478px;top:144px;color:#222;"><span style="left:0.47px;letter-spacing:1.2px;">Company</span></div>
<div class="t" style="left:1663px;top:144px;color:#222;"><span style="left:0.52px;letter-spacing:0.67px;">Organizational</span> <span style="left:107.16px;letter-spacing:0.58px;">unit</span></div>
<div class="b" style="left:255px;top:168px;width:1589px;height:1px;background:#c6c6c6"></div>
<div class="b" style="left:255px;top:169px;width:1589px;height:1px;background:#dcdcdc"></div>
<div class="b" style="left:255px;top:170px;width:1585px;height:33px;background:#eef3fd"></div>
<div class="b" style="left:286px;top:170px;width:1px;height:615px;background:#e4e4e4"></div>
<svg class="i" style="left:264.8px;top:180.7px;width:12.4px;height:12.4px" viewBox="0 0 1536 1536" preserveAspectRatio="none" fill="#8a8a8a"><path d="M1280 832V704Q1280 678 1261 659Q1242 640 1216 640H320Q294 640 275 659Q256 678 256 704V832Q256 858 275 877Q294 896 320 896H1216Q1242 896 1261 877Q1280 858 1280 832ZM1536 288V1248Q1536 1367 1452 1452Q1367 1536 1248 1536H288Q169 1536 84 1452Q0 1367 0 1248V288Q0 169 84 84Q169 0 288 0H1248Q1367 0 1452 84Q1536 169 1536 288Z"/></svg>
<div class="t" style="left:292px;top:178px;color:#222;"><span style="left:0.59px;letter-spacing:0.69px;">a.anderson</span></div>
<div class="t" style="left:477px;top:178px;color:#222;"><span style="left:0.61px;letter-spacing:-0.5px;transform:scaleX(0.801);">IE0211</span></div>
<div class="t" style="left:625px;top:178px;color:#222;"><span style="left:1.03px;letter-spacing:0.54px;">Anderson</span></div>
<div class="t" style="left:810px;top:178px;color:#222;"><span style="left:1.03px;letter-spacing:0.5px;">Aaron</span></div>
<div class="t" style="left:995px;top:178px;color:#222;"><span style="left:0.09px;letter-spacing:0.52px;">a.anderson@example.c...</span></div>
<div class="t" style="left:1330px;top:178px;color:#222;"><span style="left:0.5px;letter-spacing:0.36px;">Regular</span></div>
<div class="t" style="left:1478px;top:178px;color:#222;"><span style="left:0.25px;letter-spacing:-0.5px;transform:scaleX(0.773);">TT</span> <span style="left:17.66px;letter-spacing:-0.5px;transform:scaleX(0.964);">FVG</span> <span style="left:49.35px;">-</span> <span style="left:59.58px;letter-spacing:0.81px;">Tecnoteca</span></div>
<div class="t" style="left:1663px;top:178px;color:#222;"><span style="left:-0.14px;letter-spacing:-0.5px;transform:scaleX(0.880);">DEVELOPER_1_FE</span> <span style="left:113.05px;">-</span> <span style="left:122.72px;letter-spacing:0.52px;">Front</span> <span style="left:161.49px;letter-spacing:-0.5px;transform:scaleX(0.848);">...</span></div>
<svg class="i" style="left:1182px;top:181.4px;width:13.6px;height:13.6px" viewBox="0 0 1536 1536" preserveAspectRatio="none" fill="#0c8a0c"><path d="M1284 606Q1284 578 1266 560L1175 470Q1156 451 1130 451Q1104 451 1085 470L677 877L451 651Q432 632 406 632Q380 632 361 651L270 741Q252 759 252 787Q252 814 270 832L632 1194Q651 1213 677 1213Q704 1213 723 1194L1266 651Q1284 633 1284 606ZM1433 382Q1536 559 1536 768Q1536 977 1433 1154Q1330 1330 1154 1433Q977 1536 768 1536Q559 1536 382 1433Q206 1330 103 1154Q0 977 0 768Q0 559 103 382Q206 206 382 103Q559 0 768 0Q977 0 1154 103Q1330 206 1433 382Z"/></svg>
<div class="t" style="left:1199.5px;top:179px;color:#0c8a0c;"><span style="left:1.03px;letter-spacing:0.46px;">Active</span></div>
<div class="t" style="left:301.7px;top:216px;font-size:14.9px;color:#0073e6;"><span style="left:0.47px;letter-spacing:0.93px;">Card</span></div>
<div class="t" style="left:355.3px;top:216px;font-size:14.9px;color:#555;"><span style="left:0.49px;letter-spacing:0.38px;">Details</span></div>
<div class="t" style="left:422.2px;top:216px;font-size:14.9px;color:#555;"><span style="left:0.49px;letter-spacing:0.3px;">Notes</span></div>
<div class="t" style="left:481.3px;top:216px;font-size:14.9px;color:#555;"><span style="left:0.49px;letter-spacing:0.36px;">Relations</span></div>
<div class="t" style="left:564.4px;top:216px;font-size:14.9px;color:#555;"><span style="left:0.49px;letter-spacing:0.3px;">History</span></div>
<div class="t" style="left:630.9px;top:216px;font-size:14.9px;color:#555;"><span style="left:0.49px;letter-spacing:0.2px;">Emails</span></div>
<div class="t" style="left:695.8px;top:216px;font-size:14.9px;color:#555;"><span style="left:1.05px;letter-spacing:0.97px;">Attachments</span></div>
<div class="b" style="left:287px;top:240px;width:1552px;height:1px;background:#d0d0d0"></div>
<div class="b" style="left:295px;top:239px;width:49px;height:2px;background:#0073e6"></div>
<svg class="i" style="left:1701px;top:220.9px;width:18px;height:16px" viewBox="0 0 18 16" fill="none" stroke="#404040"><path d="M9.6 3H2.3A1.3 1.3 0 0 0 1 4.3V13.7A1.3 1.3 0 0 0 2.3 15H11.7A1.3 1.3 0 0 0 13 13.7V10.4" stroke-width="2"/><path d="M6.8 11.2L15 3" stroke-width="2.1"/><path d="M11.2 0.2H17.8V6.8z" fill="#404040" stroke="none"/></svg>
<svg class="i" style="left:1726px;top:221px;width:16.2px;height:16px" viewBox="0 0 1515 1515" preserveAspectRatio="none" fill="#404040"><path d="M363 1387 454 1296 219 1061 128 1152V1259H256V1387ZM886 459Q886 437 864 437Q854 437 847 444L305 986Q298 993 298 1003Q298 1025 320 1025Q330 1025 337 1018L879 476Q886 469 886 459ZM832 267 1248 683 416 1515H0V1099ZM1515 363Q1515 416 1478 453L1312 619L896 203L1062 38Q1098 0 1152 0Q1205 0 1243 38L1478 272Q1515 311 1515 363Z"/></svg>
<svg class="i" style="left:1751px;top:221px;width:14px;height:16px" viewBox="0 0 1408 1536" preserveAspectRatio="none" fill="#404040"><path d="M512 1248V544Q512 530 503 521Q494 512 480 512H416Q402 512 393 521Q384 530 384 544V1248Q384 1262 393 1271Q402 1280 416 1280H480Q494 1280 503 1271Q512 1262 512 1248ZM768 1248V544Q768 530 759 521Q750 512 736 512H672Q658 512 649 521Q640 530 640 544V1248Q640 1262 649 1271Q658 1280 672 1280H736Q750 1280 759 1271Q768 1262 768 1248ZM1024 1248V544Q1024 530 1015 521Q1006 512 992 512H928Q914 512 905 521Q896 530 896 544V1248Q896 1262 905 1271Q914 1280 928 1280H992Q1006 1280 1015 1271Q1024 1262 1024 1248ZM480 256H928L880 139Q873 130 863 128H546Q536 130 529 139ZM1408 288V352Q1408 366 1399 375Q1390 384 1376 384H1280V1332Q1280 1415 1233 1476Q1186 1536 1120 1536H288Q222 1536 175 1478Q128 1419 128 1336V384H32Q18 384 9 375Q0 366 0 352V288Q0 274 9 265Q18 256 32 256H341L411 89Q426 52 465 26Q504 0 544 0H864Q904 0 943 26Q982 52 997 89L1067 256H1376Q1390 256 1399 265Q1408 274 1408 288Z"/></svg>
<svg class="i" style="left:1774px;top:220.9px;width:16px;height:16px" viewBox="0 0 16 16" fill="none" stroke="#404040"><rect x="3.9" y="0.65" width="11.45" height="11.7" rx="1.5" stroke-width="1.3"/><path d="M3.3 3.5H2.1A1.45 1.45 0 0 0 .65 4.95V13.9A1.45 1.45 0 0 0 2.1 15.35H11.1A1.45 1.45 0 0 0 12.55 13.9V12.9" stroke-width="1.3"/></svg>
<svg class="i" style="left:1799.4px;top:220.9px;width:20.6px;height:16px" viewBox="0 0 20.6 16" fill="none" stroke="#404040"><path d="M2.3 5.6L10.4 13.8L18.4 5.6" stroke-width="1.6"/><path d="M10.4 2.3V13.8" stroke-width="1.1" stroke="#707070"/><g fill="#404040" stroke="none"><circle cx="10.4" cy="2.3" r="2.2"/><circle cx="2.3" cy="5.6" r="2.2"/><circle cx="18.4" cy="5.6" r="2.2"/><circle cx="10.4" cy="13.8" r="2.2"/></g></svg>
<svg class="i" style="left:1822px;top:221px;width:15.6px;height:16px" viewBox="0 0 1664 1536" preserveAspectRatio="none" fill="#404040" stroke="#404040" stroke-width="53" stroke-linejoin="round"><path d="M384 1408H1280V1152H384ZM384 768H1280V384H1120Q1080 384 1052 356Q1024 328 1024 288V128H384ZM1517 877Q1536 858 1536 832Q1536 806 1517 787Q1498 768 1472 768Q1446 768 1427 787Q1408 806 1408 832Q1408 858 1427 877Q1446 896 1472 896Q1498 896 1517 877ZM1664 832V1248Q1664 1261 1654 1270Q1645 1280 1632 1280H1408V1440Q1408 1480 1380 1508Q1352 1536 1312 1536H352Q312 1536 284 1508Q256 1480 256 1440V1280H32Q19 1280 10 1270Q0 1261 0 1248V832Q0 753 56 696Q113 640 192 640H256V96Q256 56 284 28Q312 0 352 0H1024Q1064 0 1112 20Q1160 40 1188 68L1340 220Q1368 248 1388 296Q1408 344 1408 384V640H1472Q1551 640 1608 696Q1664 753 1664 832Z"/></svg>
<svg class="i" style="left:305px;top:270.0px;width:9.2px;height:5.5px" viewBox="0 0 1024 576" preserveAspectRatio="none" fill="#808080"><path d="M960 576H64Q38 576 19 557Q0 538 0 512Q0 486 19 467L467 19Q486 0 512 0Q538 0 557 19L1005 467Q1024 486 1024 512Q1024 538 1005 557Q986 576 960 576Z"/></svg>
<div class="t" style="left:320.7px;top:264px;color:#666;"><span style="left:0.65px;letter-spacing:-0.5px;transform:scaleX(0.864);">GENERAL</span> <span style="left:62.34px;letter-spacing:-0.5px;transform:scaleX(0.918);">DATA</span></div>
<div class="b" style="left:424.0px;top:272.0px;width:1410.0px;height:1px;background:#c4c4c4"></div>
<svg class="i" style="left:305px;top:562.0px;width:9.2px;height:5.5px" viewBox="0 0 1024 576" preserveAspectRatio="none" fill="#808080"><path d="M960 576H64Q38 576 19 557Q0 538 0 512Q0 486 19 467L467 19Q486 0 512 0Q538 0 557 19L1005 467Q1024 486 1024 512Q1024 538 1005 557Q986 576 960 576Z"/></svg>
<div class="t" style="left:320.7px;top:556px;color:#666;"><span style="left:1.02px;letter-spacing:-0.5px;transform:scaleX(0.914);">ADMINISTRATIVE</span> <span style="left:110.67px;letter-spacing:-0.5px;transform:scaleX(0.918);">DATA</span></div>
<div class="b" style="left:473.4px;top:564.0px;width:1360.6px;height:1px;background:#c4c4c4"></div>
<div class="t" style="left:311.7px;top:307px;font-weight:700;color:#222;"><span style="left:0.5px;letter-spacing:0.29px;">Code</span></div>
<div class="t" style="left:311.7px;top:329px;color:#222;"><span style="left:0.59px;letter-spacing:0.69px;">a.anderson</span></div>
<div class="t" style="left:1079.5px;top:307px;font-weight:700;color:#222;"><span style="left:0.6px;letter-spacing:0.47px;">Number</span></div>
<div class="t" style="left:1079.5px;top:329px;color:#222;"><span style="left:0.61px;letter-spacing:-0.5px;transform:scaleX(0.801);">IE0211</span></div>
<div class="t" style="left:311.7px;top:367px;font-weight:700;color:#222;"><span style="left:0.62px;letter-spacing:-0.5px;transform:scaleX(0.981);">Last</span> <span style="left:32.91px;letter-spacing:1.12px;">name</span></div>
<div class="t" style="left:311.7px;top:389px;color:#222;"><span style="left:1.03px;letter-spacing:0.54px;">Anderson</span></div>
<div class="t" style="left:1079.5px;top:367px;font-weight:700;color:#222;"><span style="left:0.62px;letter-spacing:-0.5px;transform:scaleX(0.980);">First</span> <span style="left:33.98px;letter-spacing:1.12px;">name</span></div>
<div class="t" style="left:1079.5px;top:389px;color:#222;"><span style="left:1.03px;letter-spacing:0.5px;">Aaron</span></div>
<div class="t" style="left:311.7px;top:427px;font-weight:700;color:#222;"><span style="left:0.6px;letter-spacing:0.66px;">E-mail</span></div>
<div class="t" style="left:311.7px;top:449px;color:#222;"><span style="left:0.39px;letter-spacing:0.9px;">a.anderson@example.com</span></div>
<div class="t" style="left:1079.5px;top:427px;font-weight:700;color:#222;"><span style="left:0.6px;letter-spacing:0.15px;">Mobile</span></div>
<div class="t" style="left:311.7px;top:487px;font-weight:700;color:#222;"><span style="left:0.6px;letter-spacing:-0.12px;">Phone</span></div>
<div class="t" style="left:1079.5px;top:487px;font-weight:700;color:#222;"><span style="left:0.9px;letter-spacing:0.24px;">State</span></div>
<svg class="i" style="left:1080px;top:512.4px;width:13.6px;height:13.6px" viewBox="0 0 1536 1536" preserveAspectRatio="none" fill="#0c8a0c"><path d="M1284 606Q1284 578 1266 560L1175 470Q1156 451 1130 451Q1104 451 1085 470L677 877L451 651Q432 632 406 632Q380 632 361 651L270 741Q252 759 252 787Q252 814 270 832L632 1194Q651 1213 677 1213Q704 1213 723 1194L1266 651Q1284 633 1284 606ZM1433 382Q1536 559 1536 768Q1536 977 1433 1154Q1330 1330 1154 1433Q977 1536 768 1536Q559 1536 382 1433Q206 1330 103 1154Q0 977 0 768Q0 559 103 382Q206 206 382 103Q559 0 768 0Q977 0 1154 103Q1330 206 1433 382Z"/></svg>
<div class="t" style="left:1097.5px;top:510px;color:#0c8a0c;"><span style="left:1.03px;letter-spacing:0.46px;">Active</span></div>
<div class="t" style="left:311.7px;top:599px;font-weight:700;color:#222;"><span style="left:0.9px;letter-spacing:0.02px;">Start</span> <span style="left:38.4px;letter-spacing:-0.5px;transform:scaleX(0.947);">of</span> <span style="left:55.45px;letter-spacing:0.43px;">contract</span></div>
<div class="t" style="left:311.7px;top:659px;font-weight:700;color:#222;"><span style="left:0.89px;letter-spacing:-0.09px;">Type</span></div>
<div class="t" style="left:311.7px;top:681px;color:#222;"><span style="left:0.5px;letter-spacing:0.36px;">Regular</span></div>
<div class="t" style="left:1079.5px;top:659px;font-weight:700;color:#222;"><span style="left:0.5px;letter-spacing:0.74px;">Company</span></div>
<div class="t" style="left:1079.5px;top:681px;color:#222;"><span style="left:0.75px;letter-spacing:-0.5px;transform:scaleX(0.773);">TT</span> <span style="left:18.16px;letter-spacing:-0.5px;transform:scaleX(0.964);">FVG</span> <span style="left:49.85px;">-</span> <span style="left:60.08px;letter-spacing:0.81px;">Tecnoteca</span></div>
<div class="t" style="left:311.7px;top:719px;font-weight:700;color:#222;"><span style="left:0.5px;letter-spacing:0.38px;">Organizational</span> <span style="left:109.85px;letter-spacing:0.03px;">unit</span></div>
<div class="t" style="left:311.7px;top:741px;color:#222;"><span style="left:-0.15px;letter-spacing:-0.5px;transform:scaleX(0.886);">DEVELOPER_1_FE</span> <span style="left:113.9px;">-</span> <span style="left:122.82px;letter-spacing:0.29px;">Front</span> <span style="left:162.22px;letter-spacing:-0.21px;">End</span> <span style="left:191.82px;letter-spacing:0.66px;">Developer</span></div>
<svg class="i" style="left:1794px;top:682px;width:15.6px;height:13.8px" viewBox="0 0 18 16" fill="none" stroke="#8c8c8c"><path d="M9.6 3H2.3A1.3 1.3 0 0 0 1 4.3V13.7A1.3 1.3 0 0 0 2.3 15H11.7A1.3 1.3 0 0 0 13 13.7V10.4" stroke-width="1.9"/><path d="M6.8 11.2L15 3" stroke-width="2"/><path d="M11.2 0.2H17.8V6.8z" fill="#8c8c8c" stroke="none"/></svg>
<svg class="i" style="left:1026px;top:742px;width:15.6px;height:13.8px" viewBox="0 0 18 16" fill="none" stroke="#8c8c8c"><path d="M9.6 3H2.3A1.3 1.3 0 0 0 1 4.3V13.7A1.3 1.3 0 0 0 2.3 15H11.7A1.3 1.3 0 0 0 13 13.7V10.4" stroke-width="1.9"/><path d="M6.8 11.2L15 3" stroke-width="2"/><path d="M11.2 0.2H17.8V6.8z" fill="#8c8c8c" stroke="none"/></svg>
<div class="b" style="left:1840px;top:172px;width:3px;height:705px;background:#c2c2c2;border-radius:1.5px"></div>
<div class="b" style="left:1830px;top:252px;width:2.5px;height:362px;background:#ebebeb;border-radius:1px"></div>
<div class="b" style="left:255px;top:785px;width:1585px;height:32px;background:#f5f5f5"></div>
<div class="b" style="left:255px;top:817px;width:1585px;height:1px;background:#e2e2e2"></div>
<div class="b" style="left:286px;top:785px;width:1px;height:32px;background:#e4e5ec"></div>
<svg class="i" style="left:264.8px;top:795.1px;width:12px;height:12px" viewBox="0 0 1536 1536" preserveAspectRatio="none" fill="#8a8a8a"><path d="M1280 832V704Q1280 678 1261 659Q1242 640 1216 640H896V320Q896 294 877 275Q858 256 832 256H704Q678 256 659 275Q640 294 640 320V640H320Q294 640 275 659Q256 678 256 704V832Q256 858 275 877Q294 896 320 896H640V1216Q640 1242 659 1261Q678 1280 704 1280H832Q858 1280 877 1261Q896 1242 896 1216V896H1216Q1242 896 1261 877Q1280 858 1280 832ZM1536 288V1248Q1536 1367 1452 1452Q1367 1536 1248 1536H288Q169 1536 84 1452Q0 1367 0 1248V288Q0 169 84 84Q169 0 288 0H1248Q1367 0 1452 84Q1536 169 1536 288Z"/></svg>
<div class="t" style="left:292px;top:793px;color:#222;"><span style="left:0.72px;letter-spacing:0.66px;">m.brooke</span></div>
<div class="t" style="left:477px;top:793px;color:#222;"><span style="left:0.35px;letter-spacing:-0.35px;">IE0420</span></div>
<div class="t" style="left:625px;top:793px;color:#222;"><span style="left:0.5px;letter-spacing:0.21px;">Brooke</span></div>
<div class="t" style="left:810px;top:793px;color:#222;"><span style="left:0.5px;letter-spacing:0.32px;">McKayla</span></div>
<div class="t" style="left:995px;top:793px;color:#222;"><span style="left:-0.16px;letter-spacing:0.9px;">m.brooke@example.com</span></div>
<div class="t" style="left:1330px;top:793px;color:#222;"><span style="left:0.5px;letter-spacing:0.36px;">Regular</span></div>
<div class="t" style="left:1478px;top:793px;color:#222;"><span style="left:0.25px;letter-spacing:-0.5px;transform:scaleX(0.773);">TT</span> <span style="left:17.66px;letter-spacing:-0.5px;transform:scaleX(0.964);">FVG</span> <span style="left:49.35px;">-</span> <span style="left:59.58px;letter-spacing:0.81px;">Tecnoteca</span></div>
<div class="t" style="left:1663px;top:793px;color:#222;"><span style="left:0.07px;letter-spacing:-0.5px;transform:scaleX(0.928);">QA_1</span> <span style="left:36.75px;">-</span> <span style="left:47.02px;letter-spacing:0.5px;">Quality</span> <span style="left:100.07px;letter-spacing:0.63px;">Assurance</span></div>
<svg class="i" style="left:1182px;top:795.6999999999999px;width:13.6px;height:13.6px" viewBox="0 0 1536 1536" preserveAspectRatio="none" fill="#0c8a0c"><path d="M1284 606Q1284 578 1266 560L1175 470Q1156 451 1130 451Q1104 451 1085 470L677 877L451 651Q432 632 406 632Q380 632 361 651L270 741Q252 759 252 787Q252 814 270 832L632 1194Q651 1213 677 1213Q704 1213 723 1194L1266 651Q1284 633 1284 606ZM1433 382Q1536 559 1536 768Q1536 977 1433 1154Q1330 1330 1154 1433Q977 1536 768 1536Q559 1536 382 1433Q206 1330 103 1154Q0 977 0 768Q0 559 103 382Q206 206 382 103Q559 0 768 0Q977 0 1154 103Q1330 206 1433 382Z"/></svg>
<div class="t" style="left:1199.5px;top:793px;color:#0c8a0c;"><span style="left:1.03px;letter-spacing:0.46px;">Active</span></div>
<div class="b" style="left:255px;top:818px;width:1585px;height:32px;background:#fff"></div>
<div class="b" style="left:255px;top:850px;width:1585px;height:1px;background:#e2e2e2"></div>
<div class="b" style="left:286px;top:818px;width:1px;height:32px;background:#e4e5ec"></div>
<svg class="i" style="left:264.8px;top:827.1px;width:12px;height:12px" viewBox="0 0 1536 1536" preserveAspectRatio="none" fill="#8a8a8a"><path d="M1280 832V704Q1280 678 1261 659Q1242 640 1216 640H896V320Q896 294 877 275Q858 256 832 256H704Q678 256 659 275Q640 294 640 320V640H320Q294 640 275 659Q256 678 256 704V832Q256 858 275 877Q294 896 320 896H640V1216Q640 1242 659 1261Q678 1280 704 1280H832Q858 1280 877 1261Q896 1242 896 1216V896H1216Q1242 896 1261 877Q1280 858 1280 832ZM1536 288V1248Q1536 1367 1452 1452Q1367 1536 1248 1536H288Q169 1536 84 1452Q0 1367 0 1248V288Q0 169 84 84Q169 0 288 0H1248Q1367 0 1452 84Q1536 169 1536 288Z"/></svg>
<div class="t" style="left:292px;top:825px;color:#222;"><span style="left:0.59px;letter-spacing:0.7px;">c.colding</span></div>
<div class="t" style="left:477px;top:825px;color:#222;"><span style="left:0.47px;letter-spacing:-0.5px;transform:scaleX(0.906);">IE0212</span></div>
<div class="t" style="left:625px;top:825px;color:#222;"><span style="left:0.47px;letter-spacing:0.77px;">Colding</span></div>
<div class="t" style="left:810px;top:825px;color:#222;"><span style="left:0.47px;letter-spacing:0.91px;">Conrad</span></div>
<div class="t" style="left:995px;top:825px;color:#222;"><span style="left:0.19px;letter-spacing:0.88px;">c.colding@example.com</span></div>
<div class="t" style="left:1330px;top:825px;color:#222;"><span style="left:0.5px;letter-spacing:0.99px;">Part-time</span></div>
<div class="t" style="left:1478px;top:825px;color:#222;"><span style="left:0.25px;letter-spacing:-0.5px;transform:scaleX(0.773);">TT</span> <span style="left:17.66px;letter-spacing:-0.5px;transform:scaleX(0.964);">FVG</span> <span style="left:49.35px;">-</span> <span style="left:59.58px;letter-spacing:0.81px;">Tecnoteca</span></div>
<div class="t" style="left:1663px;top:825px;color:#222;"><span style="left:0.13px;letter-spacing:-0.5px;transform:scaleX(0.877);">SERVER_1_SQL</span> <span style="left:97.65px;">-</span> <span style="left:108.23px;letter-spacing:-0.5px;transform:scaleX(0.866);">SQL</span> <span style="left:136.65px;letter-spacing:-0.5px;transform:scaleX(0.996);">Serv...</span></div>
<svg class="i" style="left:1182px;top:827.9px;width:13.6px;height:13.6px" viewBox="0 0 1536 1536" preserveAspectRatio="none" fill="#0c8a0c"><path d="M1284 606Q1284 578 1266 560L1175 470Q1156 451 1130 451Q1104 451 1085 470L677 877L451 651Q432 632 406 632Q380 632 361 651L270 741Q252 759 252 787Q252 814 270 832L632 1194Q651 1213 677 1213Q704 1213 723 1194L1266 651Q1284 633 1284 606ZM1433 382Q1536 559 1536 768Q1536 977 1433 1154Q1330 1330 1154 1433Q977 1536 768 1536Q559 1536 382 1433Q206 1330 103 1154Q0 977 0 768Q0 559 103 382Q206 206 382 103Q559 0 768 0Q977 0 1154 103Q1330 206 1433 382Z"/></svg>
<div class="t" style="left:1199.5px;top:825px;color:#0c8a0c;"><span style="left:1.03px;letter-spacing:0.46px;">Active</span></div>
<div class="b" style="left:255px;top:851px;width:1585px;height:31px;background:#f5f5f5"></div>
<div class="b" style="left:255px;top:882px;width:1585px;height:1px;background:#e2e2e2"></div>
<div class="b" style="left:286px;top:851px;width:1px;height:31px;background:#e4e5ec"></div>
<svg class="i" style="left:264.8px;top:860.1px;width:12px;height:12px" viewBox="0 0 1536 1536" preserveAspectRatio="none" fill="#8a8a8a"><path d="M1280 832V704Q1280 678 1261 659Q1242 640 1216 640H896V320Q896 294 877 275Q858 256 832 256H704Q678 256 659 275Q640 294 640 320V640H320Q294 640 275 659Q256 678 256 704V832Q256 858 275 877Q294 896 320 896H640V1216Q640 1242 659 1261Q678 1280 704 1280H832Q858 1280 877 1261Q896 1242 896 1216V896H1216Q1242 896 1261 877Q1280 858 1280 832ZM1536 288V1248Q1536 1367 1452 1452Q1367 1536 1248 1536H288Q169 1536 84 1452Q0 1367 0 1248V288Q0 169 84 84Q169 0 288 0H1248Q1367 0 1452 84Q1536 169 1536 288Z"/></svg>
<div class="t" style="left:292px;top:858px;color:#222;"><span style="left:0.86px;letter-spacing:0.58px;">s.marlow</span></div>
<div class="t" style="left:477px;top:858px;color:#222;"><span style="left:0.35px;letter-spacing:-0.17px;">IE0485</span></div>
<div class="t" style="left:625px;top:858px;color:#222;"><span style="left:0.5px;letter-spacing:0.6px;">Marlow</span></div>
<div class="t" style="left:810px;top:858px;color:#222;"><span style="left:0.74px;letter-spacing:0.1px;">Serena</span></div>
<div class="t" style="left:995px;top:858px;color:#222;"><span style="left:0.4px;letter-spacing:0.86px;">s.marlow@example.com</span></div>
<div class="t" style="left:1330px;top:858px;color:#222;"><span style="left:0.5px;letter-spacing:0.99px;">Part-time</span></div>
<div class="t" style="left:1478px;top:858px;color:#222;"><span style="left:0.25px;letter-spacing:-0.5px;transform:scaleX(0.773);">TT</span> <span style="left:17.66px;letter-spacing:-0.5px;transform:scaleX(0.964);">FVG</span> <span style="left:49.35px;">-</span> <span style="left:59.58px;letter-spacing:0.81px;">Tecnoteca</span></div>
<div class="t" style="left:1663px;top:858px;color:#222;"><span style="left:0.15px;letter-spacing:-0.5px;transform:scaleX(0.845);">SERVER_1</span> <span style="left:64.8px;">-</span> <span style="left:74.45px;letter-spacing:0.22px;">Server</span> <span style="left:122.57px;letter-spacing:0.06px;">Admin...</span></div>
<svg class="i" style="left:1182px;top:860.9px;width:13.6px;height:13.6px" viewBox="0 0 1536 1536" preserveAspectRatio="none" fill="#0c8a0c"><path d="M1284 606Q1284 578 1266 560L1175 470Q1156 451 1130 451Q1104 451 1085 470L677 877L451 651Q432 632 406 632Q380 632 361 651L270 741Q252 759 252 787Q252 814 270 832L632 1194Q651 1213 677 1213Q704 1213 723 1194L1266 651Q1284 633 1284 606ZM1433 382Q1536 559 1536 768Q1536 977 1433 1154Q1330 1330 1154 1433Q977 1536 768 1536Q559 1536 382 1433Q206 1330 103 1154Q0 977 0 768Q0 559 103 382Q206 206 382 103Q559 0 768 0Q977 0 1154 103Q1330 206 1433 382Z"/></svg>
<div class="t" style="left:1199.5px;top:858px;color:#0c8a0c;"><span style="left:1.03px;letter-spacing:0.46px;">Active</span></div>
<div class="b" style="left:255px;top:883px;width:1585px;height:32px;background:#fff"></div>
<div class="b" style="left:255px;top:915px;width:1585px;height:1px;background:#e2e2e2"></div>
<div class="b" style="left:286px;top:883px;width:1px;height:32px;background:#e4e5ec"></div>
<svg class="i" style="left:264.8px;top:892.1px;width:12px;height:12px" viewBox="0 0 1536 1536" preserveAspectRatio="none" fill="#8a8a8a"><path d="M1280 832V704Q1280 678 1261 659Q1242 640 1216 640H896V320Q896 294 877 275Q858 256 832 256H704Q678 256 659 275Q640 294 640 320V640H320Q294 640 275 659Q256 678 256 704V832Q256 858 275 877Q294 896 320 896H640V1216Q640 1242 659 1261Q678 1280 704 1280H832Q858 1280 877 1261Q896 1242 896 1216V896H1216Q1242 896 1261 877Q1280 858 1280 832ZM1536 288V1248Q1536 1367 1452 1452Q1367 1536 1248 1536H288Q169 1536 84 1452Q0 1367 0 1248V288Q0 169 84 84Q169 0 288 0H1248Q1367 0 1452 84Q1536 169 1536 288Z"/></svg>
<div class="t" style="left:292px;top:890px;color:#222;"><span style="left:0.75px;letter-spacing:0.59px;">t.smith</span></div>
<div class="t" style="left:477px;top:890px;color:#222;"><span style="left:0.46px;letter-spacing:-0.5px;transform:scaleX(0.914);">IE0210</span></div>
<div class="t" style="left:625px;top:890px;color:#222;"><span style="left:0.74px;letter-spacing:0.5px;">Smith</span></div>
<div class="t" style="left:810px;top:890px;color:#222;"><span style="left:0.75px;letter-spacing:0.43px;">Tom</span></div>
<div class="t" style="left:995px;top:890px;color:#222;"><span style="left:0.58px;letter-spacing:0.83px;">t.smith@example.com</span></div>
<div class="t" style="left:1330px;top:890px;color:#222;"><span style="left:0.5px;letter-spacing:0.36px;">Regular</span></div>
<div class="t" style="left:1478px;top:890px;color:#222;"><span style="left:0.25px;letter-spacing:-0.5px;transform:scaleX(0.773);">TT</span> <span style="left:17.66px;letter-spacing:-0.5px;transform:scaleX(0.964);">FVG</span> <span style="left:49.35px;">-</span> <span style="left:59.58px;letter-spacing:0.81px;">Tecnoteca</span></div>
<div class="t" style="left:1663px;top:890px;color:#222;"><span style="left:-0.32px;letter-spacing:-0.5px;transform:scaleX(0.866);">DEVELOPER_1</span> <span style="left:89.85px;">-</span> <span style="left:99.72px;letter-spacing:0.16px;">Develope...</span></div>
<svg class="i" style="left:1182px;top:893.1999999999999px;width:13.6px;height:13.6px" viewBox="0 0 1536 1536" preserveAspectRatio="none" fill="#0c8a0c"><path d="M1284 606Q1284 578 1266 560L1175 470Q1156 451 1130 451Q1104 451 1085 470L677 877L451 651Q432 632 406 632Q380 632 361 651L270 741Q252 759 252 787Q252 814 270 832L632 1194Q651 1213 677 1213Q704 1213 723 1194L1266 651Q1284 633 1284 606ZM1433 382Q1536 559 1536 768Q1536 977 1433 1154Q1330 1330 1154 1433Q977 1536 768 1536Q559 1536 382 1433Q206 1330 103 1154Q0 977 0 768Q0 559 103 382Q206 206 382 103Q559 0 768 0Q977 0 1154 103Q1330 206 1433 382Z"/></svg>
<div class="t" style="left:1199.5px;top:891px;color:#0c8a0c;"><span style="left:1.03px;letter-spacing:0.46px;">Active</span></div>
<div class="b" style="left:255px;top:784px;width:31px;height:1px;background:#e6e8f2"></div>
<div class="b" style="left:286px;top:784px;width:1554px;height:1px;background:#1a1a44"></div>
</body></html>
